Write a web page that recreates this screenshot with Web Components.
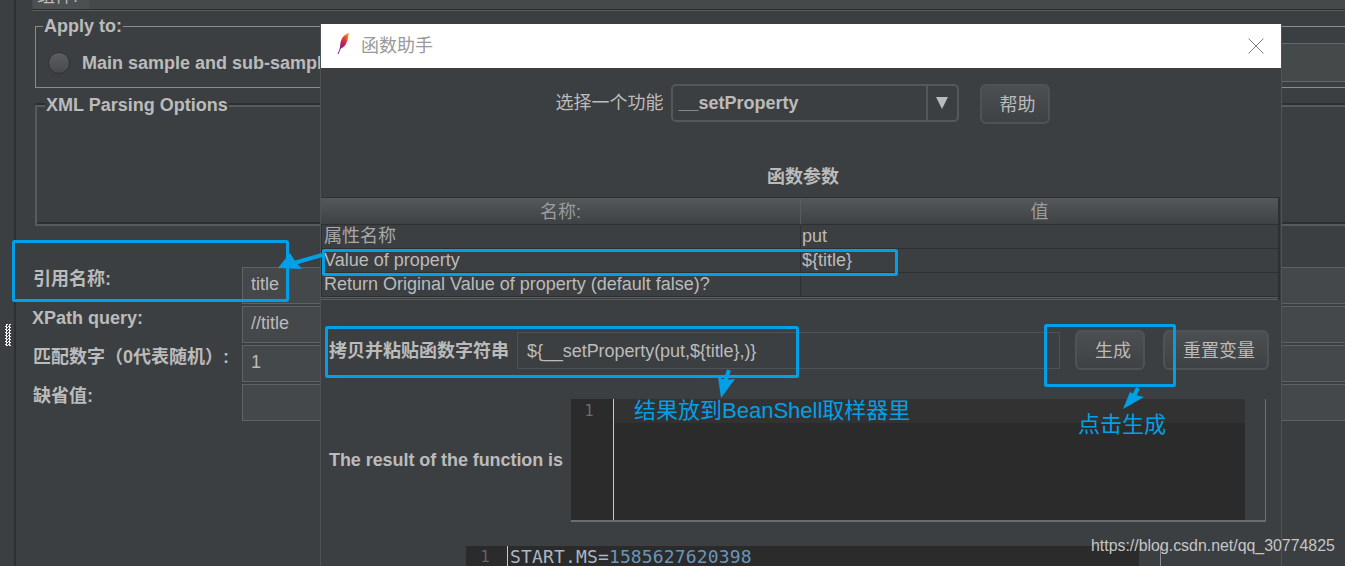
<!DOCTYPE html>
<html lang="zh">
<head>
<meta charset="utf-8">
<title>函数助手</title>
<style>
  html, body { margin: 0; height: 100%; overflow: hidden; background: #3c3f41; }
  body { font: 18px/21px "Liberation Sans", "Noto Sans CJK SC", sans-serif; color: #bbb; }
</style>
</head>
<body>
<jm-shell>
  <jm-group legend="Apply to:" tone="plain">
    <jm-radio>Main sample and sub-samples</jm-radio>
  </jm-group>
  <jm-group legend="XML Parsing Options" tone="etched"></jm-group>
  <jm-form>
    <jm-field label="引用名称:" value="title"></jm-field>
    <jm-field label="XPath query:" value="//title" strong></jm-field>
    <jm-field label="匹配数字（0代表随机）:" value="1"></jm-field>
    <jm-field label="缺省值:" value=""></jm-field>
  </jm-form>
</jm-shell>

<jm-dialog heading="函数助手">
  <jm-picker label="选择一个功能" value="__setProperty" help="帮助"></jm-picker>
  <jm-table heading="函数参数"></jm-table>
  <jm-copy-row label="拷贝并粘贴函数字符串" value="${__setProperty(put,${title},)}"></jm-copy-row>
  <jm-result label="The result of the function is"></jm-result>
  <jm-log></jm-log>
</jm-dialog>

<jm-callouts></jm-callouts>

<script>
// back panel: left rail, tab strip and the flow of groups
class JmShell extends HTMLElement {
  constructor() {
    super();
    this.attachShadow({ mode: "open" });
    this.shadowRoot.innerHTML = `
    <style>
      :host { display: grid; grid-template-columns: 16px 1fr; height: 566px; overflow: hidden; }
      .rail { border-right: 2px solid #2d2f30; padding: 324px 0 0 5px; box-sizing: border-box; }
      .grip { width: 6px; height: 22px; background: repeating-conic-gradient(#eee 0 25%, transparent 0 50%) 0 0 / 3px 3px; }
      main { padding-left: 16px; min-width: 0; }
      .tabs { height: 9px; background: #45494a; border-bottom: 1px solid #2b2b2b; box-shadow: 0 1px 0 #5a5d5f; margin-bottom: 6px; }
      .tab { display: block; width: 52px; height: 9px; margin-left: 1px; padding-left: 4px; background: #4d5052; overflow: hidden; line-height: 0; }
      .tab span { display: block; line-height: 21px; margin-top: -14px; }
    </style>
    <div class="rail"><div class="grip"></div></div>
    <main>
      <div class="tabs"><div class="tab"><span>组件:</span></div></div>
      <slot></slot>
    </main>`;
  }
}

class JmGroup extends HTMLElement {
  constructor() {
    super();
    this.attachShadow({ mode: "open" });
  }

  connectedCallback() {
    const etched = this.getAttribute("tone") === "etched";
    this.shadowRoot.innerHTML = `
    <style>
      :host { display: block; margin: ${etched ? "7px" : "0"} -30px 0 3px; }
      fieldset { margin: 0; min-width: 0; box-sizing: border-box; padding: 6px 0 5px 12px; }
      fieldset.plain { border: 1px solid #8c8c8c; }
      fieldset.etched { border: 2px solid #585b5d; height: 131px; box-shadow: 0 -2px 0 #2d2f30, inset 0 -2px 0 #2d2f30; }
      legend { font-weight: bold; color: #bbb; background: #3c3f41; padding: 0 1px; margin-left: ${etched ? "-4px" : "-5px"}; }
    </style>
    <fieldset class="${etched ? "etched" : "plain"}">
      <legend>${this.getAttribute("legend")}</legend>
      <slot></slot>
    </fieldset>`;
  }
}

class JmRadio extends HTMLElement {
  constructor() {
    super();
    this.attachShadow({ mode: "open" });
    this.shadowRoot.innerHTML = `
    <style>
      :host { display: flex; align-items: center; height: 39px; font-weight: bold; }
      .dot { width: 20px; height: 20px; margin-right: 12px; border-radius: 50%; border: 1px solid #2f3132; background: linear-gradient(#5c5f61, #47494b); flex: none; }
      .text { padding-top: 2px; white-space: nowrap; }
      .fill { flex: 1; height: 39px; margin-left: 40px; background: #45494a; border: 1px solid #64676a; box-sizing: border-box; }
    </style>
    <span class="dot"></span><span class="text"><slot></slot></span><span class="fill"></span>`;
  }
}

class JmForm extends HTMLElement {
  constructor() {
    super();
    this.attachShadow({ mode: "open" });
    this.shadowRoot.innerHTML = `
    <style>
      :host { display: grid; gap: 2px; margin: 41px -10px 0 1px; }
    </style>
    <slot></slot>`;
  }
}

class JmField extends HTMLElement {
  constructor() {
    super();
    this.attachShadow({ mode: "open" });
  }

  connectedCallback() {
    this.shadowRoot.innerHTML = `
    <style>
      :host { display: grid; grid-template-columns: 209px 1fr; height: 37px; }
      .label { padding-top: 2px; line-height: 21px; margin-left: ${this.hasAttribute("strong") ? "-1px" : "0"}; font-weight: bold; white-space: nowrap; }
      .input { box-sizing: border-box; padding: 6px 8px; background: #45484a; border: 1px solid #5f6264; }
    </style>
    <div class="label">${this.getAttribute("label")}</div>
    <div class="input">${this.getAttribute("value")}</div>`;
  }
}

class JmDialog extends HTMLElement {
  constructor() {
    super();
    this.attachShadow({ mode: "open" });
  }

  connectedCallback() {
    this.shadowRoot.innerHTML = `
    <style>
      :host { position: absolute; left: 320px; top: 24px; width: 960px; height: 542px; background: #3c3f41; border: solid #505355; border-width: 0 1px; overflow: hidden; }
      header { display: flex; align-items: center; height: 44px; background: #fff; color: #999; padding: 0 17px 0 14px; }
      h1 { flex: 1; margin: 0 0 0 8px; font: inherit; }
      svg { display: block; flex: none; }
      .logo { margin-bottom: 6px; }
    </style>
    <header>
      <svg class="logo" width="18" height="24" viewBox="0 0 18 24">
        <defs><linearGradient id="feather" x1="0.8" y1="0" x2="0.2" y2="1">
          <stop offset="0" stop-color="#f8a01e"/><stop offset=".3" stop-color="#ee4a2a"/>
          <stop offset=".65" stop-color="#c8214f"/><stop offset="1" stop-color="#7d2a8c"/>
        </linearGradient></defs>
        <path fill="url(#feather)" d="M14 2c-3 .5-6 3-7.500 6.500C5.500 11 5 14 4.800 18l2.200-1c3.200-1.500 4.800-5 5.600-8.500.4-2 .9-4.300 1.400-6.500z"/>
        <path stroke="#7d2a8c" fill="none" d="M5.500 17l-2.500 6"/>
      </svg>
      <h1>${this.getAttribute("heading")}</h1>
      <svg width="16" height="16" viewBox="0 0 16 16"><path d="M.5.500l15 15M15.500.500l-15 15" stroke="#808080" fill="none"/></svg>
    </header>
    <slot></slot>`;
  }
}

class JmPicker extends HTMLElement {
  constructor() {
    super();
    this.attachShadow({ mode: "open" });
  }

  connectedCallback() {
    this.shadowRoot.innerHTML = `
    <style>
      :host { display: flex; align-items: flex-start; justify-content: center; padding: 16px 0 0 3px; height: 40px; }
      .label { line-height: 38px; margin-right: 7px; white-space: nowrap; }
      .combo { display: flex; box-sizing: border-box; width: 288px; height: 38px; border: 2px solid #55585a; border-radius: 5px; margin-right: 21px; font-weight: bold; line-height: 34px; }
      .text { flex: 1; padding-left: 6px; }
      .arrow { width: 29px; border-left: 2px solid #55585a; display: flex; align-items: center; justify-content: center; }
      .arrow i { border: solid transparent; border-width: 12px 6px 0; border-top-color: #bbb; }
      jm-button { width: 70px; height: 40px; }
    </style>
    <span class="label">${this.getAttribute("label")}</span>
    <div class="combo"><span class="text">${this.getAttribute("value")}</span><span class="arrow"><i></i></span></div>
    <jm-button>${this.getAttribute("help")}</jm-button>`;
  }
}

class JmButton extends HTMLElement {
  constructor() {
    super();
    this.attachShadow({ mode: "open" });
    this.shadowRoot.innerHTML = `
    <style>
      :host { display: flex; align-items: center; justify-content: center; box-sizing: border-box; flex: none; padding: 2px 0 0 6px; border: 2px solid #505355; border-radius: 6px; background: linear-gradient(#4b4f51, #3f4244); white-space: nowrap; }
    </style>
    <slot></slot>`;
  }
}

class JmTable extends HTMLElement {
  constructor() {
    super();
    this.attachShadow({ mode: "open" });
  }

  static get rows() {
    return [
      ["属性名称", "put"],
      ["Value of property", "\${title}"],
      ["Return Original Value of property (default false)?", ""]
    ];
  }

  connectedCallback() {
    const rows = JmTable.rows.map(([name, value]) =>
      `<div class="cell">${name}</div><div class="cell">${value}</div>`).join("");
    this.shadowRoot.innerHTML = `
    <style>
      :host { display: block; margin-top: 43px; }
      h2 { margin: 0 0 9px; padding-left: 4px; font: bold 18px/21px "Liberation Sans", "Noto Sans CJK SC", sans-serif; text-align: center; color: #bbb; }
      .table { display: grid; grid-template-columns: 479px 478px; margin-right: 3px; border-top: 1px solid #2d2f30; border-bottom: 3px double #5a5d5f; box-shadow: 2px 0 0 #2d2f30; }
      .head { height: 26px; line-height: 29px; text-align: center; color: #9a9d9f; background: linear-gradient(#54585a, #3f4244); border-bottom: 1px solid #2d2f30; }
      .head + .head { border-left: 1px solid #5a5d5f; }
      .cell { box-sizing: border-box; height: 24px; line-height: 23px; white-space: nowrap; border-bottom: 1px solid #2d2f30; border-left: 1px solid #2d2f30; padding-left: 1px; }
      .cell:nth-child(odd) { padding-left: 2px; }
      .cell:nth-child(3) { color: #a9a9a9; }
    </style>
    <h2>${this.getAttribute("heading")}</h2>
    <div class="table">
      <div class="head">名称:</div><div class="head">值</div>
      ${rows}
    </div>`;
  }
}

class JmCopyRow extends HTMLElement {
  constructor() {
    super();
    this.attachShadow({ mode: "open" });
  }

  connectedCallback() {
    this.shadowRoot.innerHTML = `
    <style>
      :host { display: flex; align-items: center; height: 40px; margin-top: 30px; padding: 0 12px 0 8px; }
      .label { width: 188px; padding-top: 3px; font-weight: bold; white-space: nowrap; flex: none; }
      .input { flex: 1; box-sizing: border-box; height: 37px; padding: 8px 9px 0; border: 1px solid #4f5254; margin-right: 15px; white-space: nowrap; letter-spacing: -.06px; }
      jm-button { height: 40px; }
      .gen { width: 70px; margin-right: 18px; }
      .reset { width: 106px; }
    </style>
    <div class="label">${this.getAttribute("label")}</div>
    <div class="input">${this.getAttribute("value")}</div>
    <jm-button class="gen">生成</jm-button>
    <jm-button class="reset">重置变量</jm-button>`;
  }
}

class JmResult extends HTMLElement {
  constructor() {
    super();
    this.attachShadow({ mode: "open" });
  }

  connectedCallback() {
    this.shadowRoot.innerHTML = `
    <style>
      :host { display: flex; align-items: center; height: 123px; margin-top: 29px; padding: 0 15px 0 8px; }
      .label { width: 242px; flex: none; font-weight: bold; white-space: nowrap; letter-spacing: -.07px; }
      .editor { flex: 1; height: 123px; box-sizing: border-box; display: flex; background: #2b2b2b; border: solid #6b6e70; border-width: 0 1px 2px 0; }
      .gutter { width: 42px; border-right: 1px solid #c8c8c8; text-align: center; color: #6a6d6f; font: 15px/24px "DejaVu Sans Mono", monospace; }
      .gutter span { display: block; padding-right: 6px; }
      .body { flex: 1; }
      .current { height: 24px; background: #323232; }
      .bar { width: 20px; background: #3c3f41; }
    </style>
    <div class="label">${this.getAttribute("label")}</div>
    <div class="editor">
      <div class="gutter"><span>1</span></div>
      <div class="body"><div class="current"></div></div>
      <div class="bar"></div>
    </div>`;
  }
}

class JmLog extends HTMLElement {
  constructor() {
    super();
    this.attachShadow({ mode: "open" });
    this.shadowRoot.innerHTML = `
    <style>
      :host { display: flex; height: 30px; margin: 24px 120px 0 145px; border-right: 1px solid #8a8d8f; }
      .gutter { width: 41px; text-align: center; color: #606366; background: #2b2b2b; border-right: 1px solid #c8c8c8; font: 16px/22px "DejaVu Sans Mono", monospace; }
      .gutter span { display: block; padding-right: 3px; }
      .code { flex: 1; background: #2b2b2b; color: #a9b7c6; font: 18px/22px "DejaVu Sans Mono", monospace; letter-spacing: .15px; padding-left: 2px; white-space: nowrap; }
      .num { color: #6897bb; }
      .bar { width: 21px; background: #3c3f41; }
    </style>
    <div class="gutter"><span>1</span></div>
    <div class="code">START.MS=<span class="num">1585627620398</span></div>
    <div class="bar"></div>`;
  }
}

// blue annotations drawn on the screenshot, these sit over everything
class JmCallouts extends HTMLElement {
  constructor() {
    super();
    this.attachShadow({ mode: "open" });
    this.shadowRoot.innerHTML = `
    <style>
      :host { position: absolute; inset: 0; pointer-events: none; overflow: hidden; }
      svg { position: absolute; left: 0; top: 0; }
      rect { fill: none; stroke: #00a0e9; stroke-width: 3; }
      line { stroke: #00a0e9; stroke-width: 4; }
      polygon { fill: #00a0e9; }
      span { position: absolute; color: #00a0e9; font: 22px/26px "Liberation Sans", "Noto Sans CJK SC", sans-serif; white-space: nowrap; }
      .mark { left: 1091px; top: 537px; color: #c4c6c8; font: 15.900px/18px "Liberation Sans", sans-serif; }
    </style>
    <svg width="1345" height="566" viewBox="0 0 1345 566">
      <rect x="13.500" y="241.500" width="274" height="59" rx="1"/>
      <rect x="323.500" y="250.500" width="573" height="24" rx="1"/>
      <rect x="326.500" y="327.500" width="471" height="49" rx="1"/>
      <rect x="1045.500" y="325.500" width="129" height="60" rx="1"/>
      <line x1="322" y1="255" x2="294" y2="263"/>
      <polygon points="278,268 290,253 295,261 302,269"/>
      <line x1="729" y1="370" x2="725" y2="382"/>
      <polygon points="721,398 718,377 725,380 735,379"/>
      <line x1="1138" y1="388" x2="1133" y2="398"/>
      <polygon points="1123,409 1130,392 1135,395 1144,397"/>
    </svg>
    <span style="left:634px;top:398px">结果放到BeanShell取样器里</span>
    <span style="left:1078px;top:412px">点击生成</span>
    <span class="mark">https://blog.csdn.net/qq_30774825</span>`;
  }
}

customElements.define("jm-shell", JmShell);
customElements.define("jm-group", JmGroup);
customElements.define("jm-radio", JmRadio);
customElements.define("jm-form", JmForm);
customElements.define("jm-field", JmField);
customElements.define("jm-button", JmButton);
customElements.define("jm-dialog", JmDialog);
customElements.define("jm-picker", JmPicker);
customElements.define("jm-table", JmTable);
customElements.define("jm-copy-row", JmCopyRow);
customElements.define("jm-result", JmResult);
customElements.define("jm-log", JmLog);
customElements.define("jm-callouts", JmCallouts);
</script>
</body>
</html>
